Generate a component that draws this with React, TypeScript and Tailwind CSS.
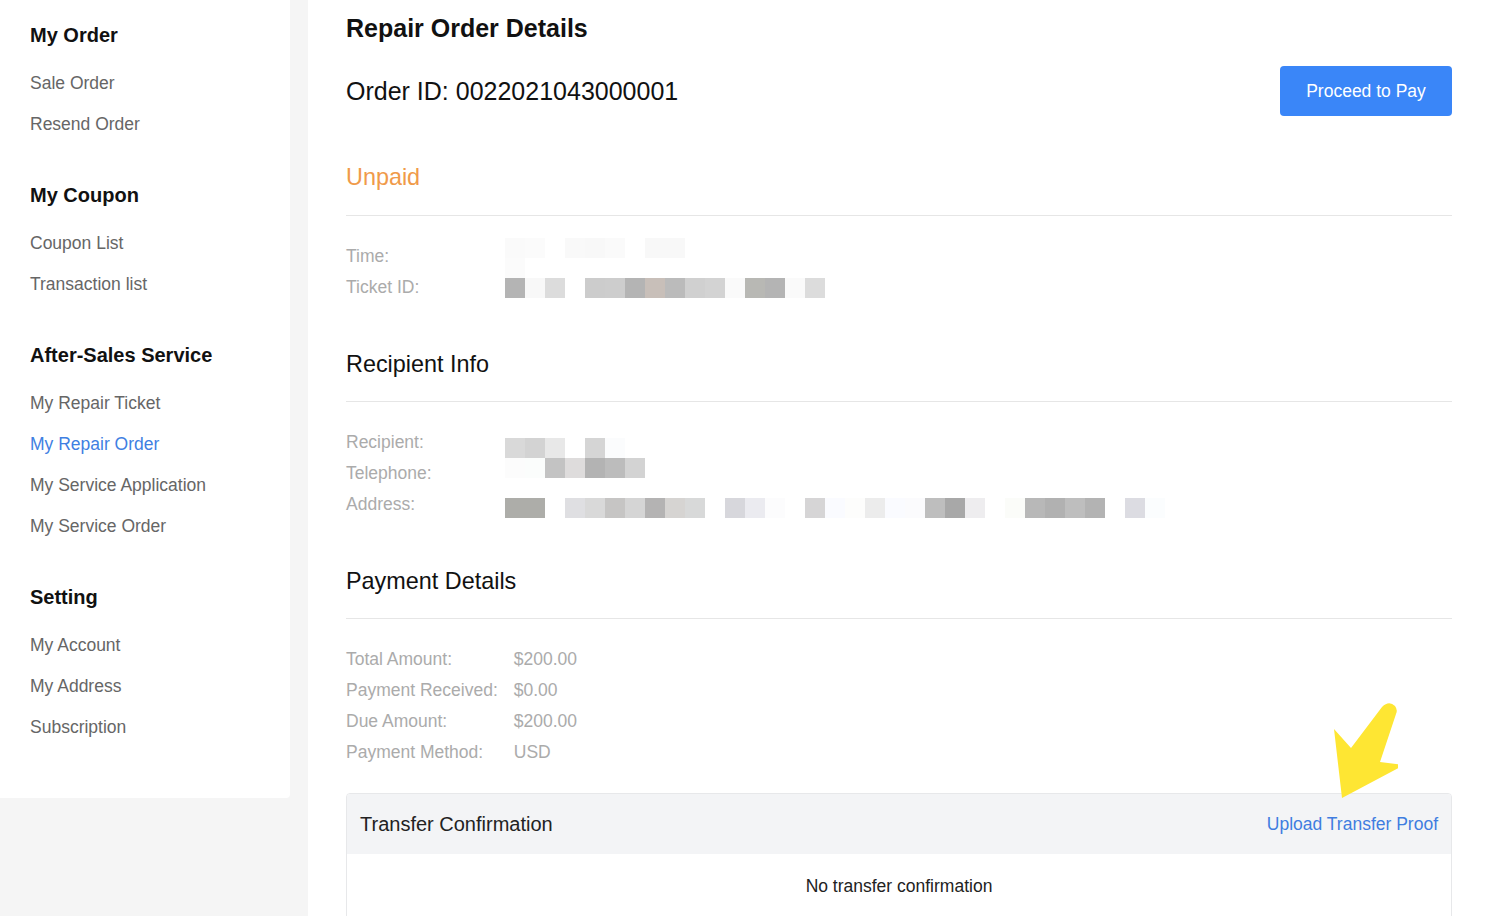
import React from 'react';

type Section = { title: string; items: string[] };

const menu: Section[] = [
  { title: 'My Order', items: ['Sale Order', 'Resend Order'] },
  { title: 'My Coupon', items: ['Coupon List', 'Transaction list'] },
  { title: 'After-Sales Service', items: ['My Repair Ticket', 'My Repair Order', 'My Service Application', 'My Service Order'] },
  { title: 'Setting', items: ['My Account', 'My Address', 'Subscription'] },
];

// blurred (pixelated) personal data, one entry per 20px cell, null = blank
const timeCells: (string | null)[][] = [
  ['#fafafa', '#fbfbfb', null, '#f9f9f9', '#f8f8f8', '#fafafa', null, '#f8f8f8', '#f8f8f8'],
  ['#fbfbfb'],
  ['#b4b4b4', '#f8f8f8', '#dcdcdc', null, '#cccccc', '#cdcdcd', '#b4b4b4', '#c8bfb9', '#bbbbbb', '#d0d0d0', '#d3d3d3', '#fafafa', '#b8b8b4', '#b4b4b4', '#fafafa', '#dcdcdc'],
];

const recipientCells: (string | null)[][] = [
  ['#d9d9d9', '#d3d3d3', '#e8e8e8', null, '#d5d5d5', '#fbfcfd'],
  ['#fcfcfc', '#fbfdfc', '#c3c3c3', '#dedcdc', '#b3b3b3', '#bcbcbc', '#d3d3d3'],
  [],
  ['#adada9', '#adada9', null, '#dfdfe2', '#d9d9d9', '#c6c5c4', '#d5d5d5', '#b4b3b3', '#d6d4d2', '#d8d9d9', null, '#d7d7dc', '#ebebf0', '#fcfcfd', null, '#d6d5d6', '#fafbff', '#fdfdfc', '#ececec', '#fafbff', '#fbfbfd', '#bebebe', '#a8a8a8', '#eeedef', null, '#fbfcf9', '#b8b8b8', '#b1b1b1', '#bebebe', '#b3b3b3', null, '#dcdce2', '#fbfdfe'],
];

const Mosaic = ({ rows }: { rows: (string | null)[][] }) => (
  <div className="flex flex-col">
    {rows.map((row, i) => (
      <div key={i} className="flex h-5">
        {row.map((c, j) => (
          <div key={j} className="w-5 h-5" style={{ backgroundColor: c ?? 'transparent' }} />
        ))}
      </div>
    ))}
  </div>
);

const SectionHead = ({ children, className = '' }: { children: React.ReactNode; className?: string }) => (
  <div className={`pb-[21px] border-b border-[#e6e6e6] ${className}`}>{children}</div>
);

const Label = ({ children }: { children: React.ReactNode }) => (
  <p className="h-[31px] leading-[31px] text-[17.5px] text-[#ababab]">{children}</p>
);

const payment = [
  ['Total Amount:', '$200.00'],
  ['Payment Received:', '$0.00'],
  ['Due Amount:', '$200.00'],
  ['Payment Method:', 'USD'],
];

export default function App() {
  return (
    <div className="min-h-screen bg-[#f5f5f5] flex font-['Liberation_Sans',Arial,sans-serif]">
      <aside className="w-[290px] shrink-0 self-start bg-white rounded-br-[4px] pl-[30px] pt-[21px] pb-[50px]">
        {menu.map((s, i) => (
          <div key={s.title} className={i > 0 ? 'mt-[36px]' : ''}>
            <h3 className="h-7 leading-7 text-[20px] font-bold text-[#111] mb-[14px]">{s.title}</h3>
            {s.items.map((it) => (
              <p
                key={it}
                className={`h-[41px] leading-[41px] text-[17.5px] ${it === 'My Repair Order' ? 'text-[#3f7fe2]' : 'text-[#666]'}`}
              >
                {it}
              </p>
            ))}
          </div>
        ))}
      </aside>

      <main className="relative ml-[18px] flex-1 min-h-[916px] bg-white px-[38px] pt-3">
        <h1 className="h-8 leading-8 text-[25px] font-bold text-[#111]">Repair Order Details</h1>

        <div className="mt-[22px] flex items-center justify-between">
          <p className="pt-[2px] text-[25px] text-[#111]">Order ID: 0022021043000001</p>
          <button className="w-[172px] h-[50px] rounded-[4px] bg-[#3a86f8] text-white text-[17.5px]">Proceed to Pay</button>
        </div>

        <SectionHead className="mt-[45px] !pb-[22px]">
          <p className="h-8 leading-8 text-[23.4px] text-[#f09a4a]">Unpaid</p>
        </SectionHead>
        <div className="mt-[23px] flex">
          <div className="w-[159px] pt-[2px]">
            <Label>Time:</Label>
            <Label>Ticket ID:</Label>
          </div>
          <div className="-mt-[1px]">
            <Mosaic rows={timeCells} />
          </div>
        </div>

        <SectionHead className="mt-[45px]">
          <p className="h-8 leading-8 text-[23.4px] text-[#111]">Recipient Info</p>
        </SectionHead>
        <div className="mt-[23px] flex">
          <div className="w-[159px] pt-[2px]">
            <Label>Recipient:</Label>
            <Label>Telephone:</Label>
            <Label>Address:</Label>
          </div>
          <div className="mt-[13px]">
            <Mosaic rows={recipientCells} />
          </div>
        </div>

        <SectionHead className="mt-[45px]">
          <p className="h-8 leading-8 text-[23.4px] text-[#111]">Payment Details</p>
        </SectionHead>
        <div className="mt-[25px] grid grid-cols-[auto_1fr] gap-x-[16px] w-fit">
          {payment.map(([k, v]) => (
            <React.Fragment key={k}>
              <Label>{k}</Label>
              <Label>{v}</Label>
            </React.Fragment>
          ))}
        </div>

        <div className="mt-[25px] border border-[#e7e8ea] rounded-t-[4px] overflow-hidden">
          <div className="h-[60px] bg-[#f3f4f6] flex items-center justify-between px-[13px]">
            <span className="text-[20px] text-[#222]">Transfer Confirmation</span>
            <span className="text-[17.5px] text-[#3f7de0]">Upload Transfer Proof</span>
          </div>
          <div className="pt-[20px] pb-[20px] text-center text-[17.5px] text-[#222] leading-[24px]">No transfer confirmation</div>
        </div>

        {/* annotation arrow */}
        <svg className="absolute left-[1010px] top-[696px]" width="80" height="110" viewBox="1318 696 80 110">
          <path
            d="M1342 798 L1334 729 L1351 748 L1382 707 Q1389 700 1395 706 Q1398 710 1396 714 L1380 762 L1404 765 Z"
            fill="#fee633"
          />
        </svg>
      </main>
    </div>
  );
}
